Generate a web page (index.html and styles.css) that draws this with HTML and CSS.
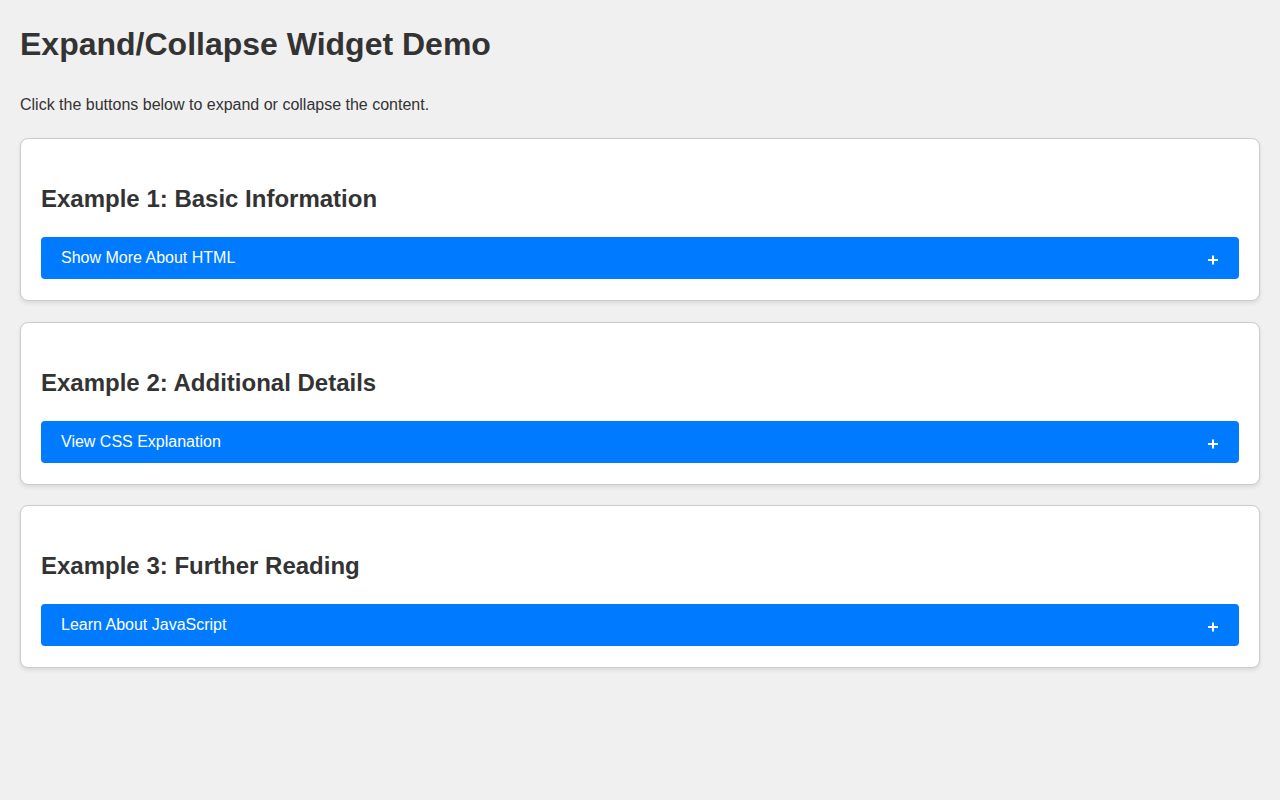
FILE: index.html
```html
<!DOCTYPE html>
<html lang="en">
<head>
<meta charset="utf-8">
<title>Expand/Collapse Widget Demo</title>
<link rel="stylesheet" href="styles.css">
</head>
<body>
  <h1 class="title">Expand/Collapse Widget Demo</h1>
  <p class="intro">Click the buttons below to expand or collapse the content.</p>

  <section class="card">
    <h2 class="card-title">Example 1: Basic Information</h2>
    <button class="toggle" type="button">
      <span class="toggle-label">Show More About HTML</span>
      <svg class="toggle-icon" width="10" height="10" viewBox="0 0 10 10" aria-hidden="true"><path d="M5 0.5v9M0 5h10" stroke="#fff" stroke-width="2"/></svg>
    </button>
  </section>

  <section class="card">
    <h2 class="card-title">Example 2: Additional Details</h2>
    <button class="toggle" type="button">
      <span class="toggle-label">View CSS Explanation</span>
      <svg class="toggle-icon" width="10" height="10" viewBox="0 0 10 10" aria-hidden="true"><path d="M5 0.5v9M0 5h10" stroke="#fff" stroke-width="2"/></svg>
    </button>
  </section>

  <section class="card">
    <h2 class="card-title">Example 3: Further Reading</h2>
    <button class="toggle" type="button">
      <span class="toggle-label">Learn About JavaScript</span>
      <svg class="toggle-icon" width="10" height="10" viewBox="0 0 10 10" aria-hidden="true"><path d="M5 0.5v9M0 5h10" stroke="#fff" stroke-width="2"/></svg>
    </button>
  </section>
</body>
</html>
```

FILE: styles.css
```css
html, body {
  margin: 0;
}

body {
  padding: 20px;
  background: #f0f0f0;
  color: #333333;
  font-family: "Liberation Sans", Arial, Helvetica, sans-serif;
  line-height: 1.5;
}

.title {
  margin: 0 0 25px;
  font-size: 32px;
  line-height: 48px;
  font-weight: bold;
}

.intro {
  margin: 0 0 21px;
  font-size: 16px;
  line-height: 24px;
}

.card {
  background: #ffffff;
  border: 1px solid #cccccc;
  border-radius: 8px;
  padding: 20px 20px 21px;
  margin-bottom: 20.5px;
  box-shadow: 0 2px 4px rgba(0, 0, 0, 0.1);
}

.card-title {
  margin: 22px 0 20px;
  font-size: 24px;
  line-height: 36px;
  font-weight: bold;
}

.toggle {
  display: flex;
  align-items: center;
  justify-content: space-between;
  width: 100%;
  margin: 0;
  padding: 9px 20px;
  border: none;
  border-radius: 4px;
  background: #007bff;
  color: #ffffff;
  font-family: "Liberation Sans", Arial, Helvetica, sans-serif;
  font-size: 16px;
  line-height: 24px;
  text-align: left;
  cursor: pointer;
}

.toggle-label {
  display: block;
}

.toggle-icon {
  display: block;
  margin-top: 4px;
  margin-right: 1px;
}
```
